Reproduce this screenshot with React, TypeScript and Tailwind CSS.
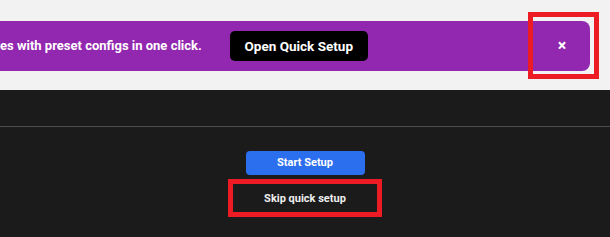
export default function App() {
  return (
    <div className="relative w-[610px] h-[237px] overflow-hidden bg-[#1b1b1b] font-['Roboto',sans-serif]">
      <div className="h-[90px] bg-[#f2f2f2] pt-[21px]">
        <div className="w-[590px] h-[50px] bg-[#9227b0] rounded-r-[8px] flex items-center">
          <span className="text-white font-bold text-[13px] whitespace-nowrap">
            es with preset configs in one click.
          </span>
          <button className="ml-[28px] w-[138px] h-[30px] rounded-[5px] bg-black text-white font-bold text-[13.5px]">
            Open Quick Setup
          </button>
          <div className="flex-1" />
          <button className="mr-[22px] w-[12px] text-white font-bold text-[16px] leading-none">
            ×
          </button>
        </div>
      </div>

      <div className="pt-[36px]">
        <div className="h-px bg-[#4d4d4d]" />
        <div className="flex flex-col items-center pt-[24px]">
          <button className="w-[119px] h-[24px] rounded-[4px] bg-[#2b6fee] text-white font-bold text-[11px]">
            Start Setup
          </button>
          <button className="mt-[10px] h-[28px] px-4 text-[#eeeeee] font-bold text-[11px]">
            Skip quick setup
          </button>
        </div>
      </div>

      <div className="absolute left-[528px] top-[12px] w-[71px] h-[67px] border-[5px] border-[#ed1c24]" />
      <div className="absolute left-[228px] top-[179px] w-[154px] h-[38px] border-[5px] border-[#ed1c24]" />
    </div>
  );
}
